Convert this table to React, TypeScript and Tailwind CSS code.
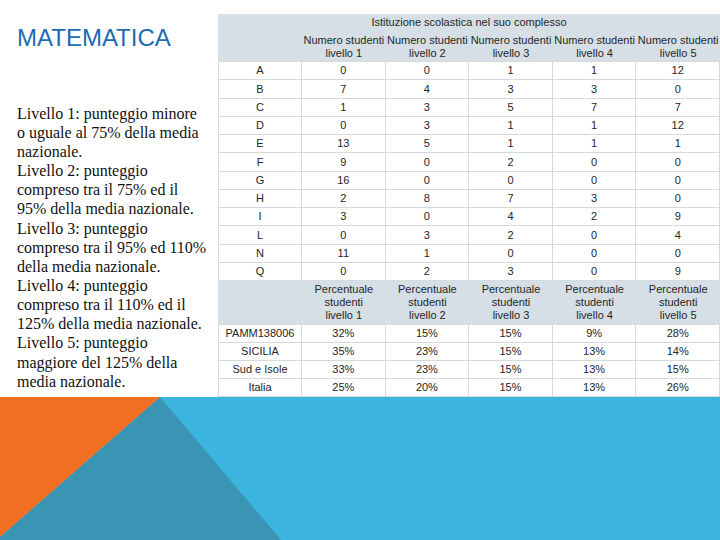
import React from "react";

const leftLines = [
  "Livello 1: punteggio minore",
  "o uguale al 75% della media",
  "nazionale.",
  "Livello 2: punteggio",
  "compreso tra il 75% ed il",
  "95% della media nazionale.",
  "Livello 3: punteggio",
  "compreso tra il 95% ed 110%",
  "della media nazionale.",
  "Livello 4: punteggio",
  "compreso tra il 110% ed il",
  "125% della media nazionale.",
  "Livello 5: punteggio",
  "maggiore del 125% della",
  "media nazionale.",
];

const counts: [string, string[]][] = [
  ["A", ["0", "0", "1", "1", "12"]],
  ["B", ["7", "4", "3", "3", "0"]],
  ["C", ["1", "3", "5", "7", "7"]],
  ["D", ["0", "3", "1", "1", "12"]],
  ["E", ["13", "5", "1", "1", "1"]],
  ["F", ["9", "0", "2", "0", "0"]],
  ["G", ["16", "0", "0", "0", "0"]],
  ["H", ["2", "8", "7", "3", "0"]],
  ["I", ["3", "0", "4", "2", "9"]],
  ["L", ["0", "3", "2", "0", "4"]],
  ["N", ["11", "1", "0", "0", "0"]],
  ["Q", ["0", "2", "3", "0", "9"]],
];

const perc: [string, string[]][] = [
  ["PAMM138006", ["32%", "15%", "15%", "9%", "28%"]],
  ["SICILIA", ["35%", "23%", "15%", "13%", "14%"]],
  ["Sud e Isole", ["33%", "23%", "15%", "13%", "15%"]],
  ["Italia", ["25%", "20%", "15%", "13%", "26%"]],
];

function DataRow({ label, values, h }: { label: string; values: string[]; h: string }) {
  return (
    <div className={`grid grid-cols-[84px_repeat(5,1fr)] ${h}`}>
      <div className="flex items-center justify-center border-l border-r border-b border-[#d3dbe0] bg-white">
        {label}
      </div>
      {values.map((v, i) => (
        <div
          key={i}
          className="flex items-center justify-center border-r border-b border-[#d3dbe0] bg-white"
        >
          {v}
        </div>
      ))}
    </div>
  );
}

export default function App() {
  return (
    <div className="w-[720px] h-[540px] overflow-hidden bg-white flex flex-col">
      <div className="h-[397px] flex">
        <div className="w-[218px] shrink-0 pl-[17px]">
          <div
            className="mt-[24px] text-[24px] leading-[28px] text-[#1c6cb4]"
            style={{ fontFamily: '"Liberation Sans", Arial, sans-serif' }}
          >
            MATEMATICA
          </div>
          <div
            className="mt-[52px] text-[16px] leading-[19.1px] text-[#111111]"
            style={{ fontFamily: '"Liberation Serif", "Times New Roman", serif' }}
          >
            {leftLines.map((l, i) => (
              <div key={i} className={i === 13 ? "whitespace-nowrap mt-[1px]" : "whitespace-nowrap"}>
                {l}
              </div>
            ))}
          </div>
        </div>
        <div
          className="flex-1 pt-[14px] text-[11px] text-[#262626]"
          style={{ fontFamily: '"Liberation Sans", Arial, sans-serif' }}
        >
          <div className="bg-[#d5dfe5] h-[48px] flex flex-col border-b border-[#d3dbe0]">
            <div className="h-[17px] flex items-center justify-center">
              Istituzione scolastica nel suo complesso
            </div>
            <div className="flex-1 grid grid-cols-[84px_repeat(5,1fr)] pt-[2px]">
              <div />
              {[1, 2, 3, 4, 5].map((n) => (
                <div key={n} className="flex flex-col items-center justify-center leading-[13px] whitespace-nowrap">
                  <span>Numero studenti</span>
                  <span>livello {n}</span>
                </div>
              ))}
            </div>
          </div>
          {counts.map(([l, v]) => (
            <DataRow key={l} label={l} values={v} h="h-[18.25px]" />
          ))}
          <div className="bg-[#d5dfe5] h-[44px] grid grid-cols-[84px_repeat(5,1fr)] border-b border-[#d3dbe0]">
            <div />
            {[1, 2, 3, 4, 5].map((n) => (
              <div key={n} className="flex flex-col items-center justify-center leading-[13px]">
                <span>Percentuale</span>
                <span>studenti</span>
                <span>livello {n}</span>
              </div>
            ))}
          </div>
          {perc.map(([l, v]) => (
            <DataRow key={l} label={l} values={v} h="h-[18px]" />
          ))}
        </div>
      </div>
      <div className="flex-1">
        <svg width="720" height="143" viewBox="0 0 720 143" className="block">
          <rect x="0" y="0" width="720" height="143" fill="#3cb4e0" />
          <polygon points="160,0 281,143 0,143 0,140" fill="#3a95b4" />
          <polygon points="0,0 160,0 0,140" fill="#f36f21" />
        </svg>
      </div>
    </div>
  );
}
